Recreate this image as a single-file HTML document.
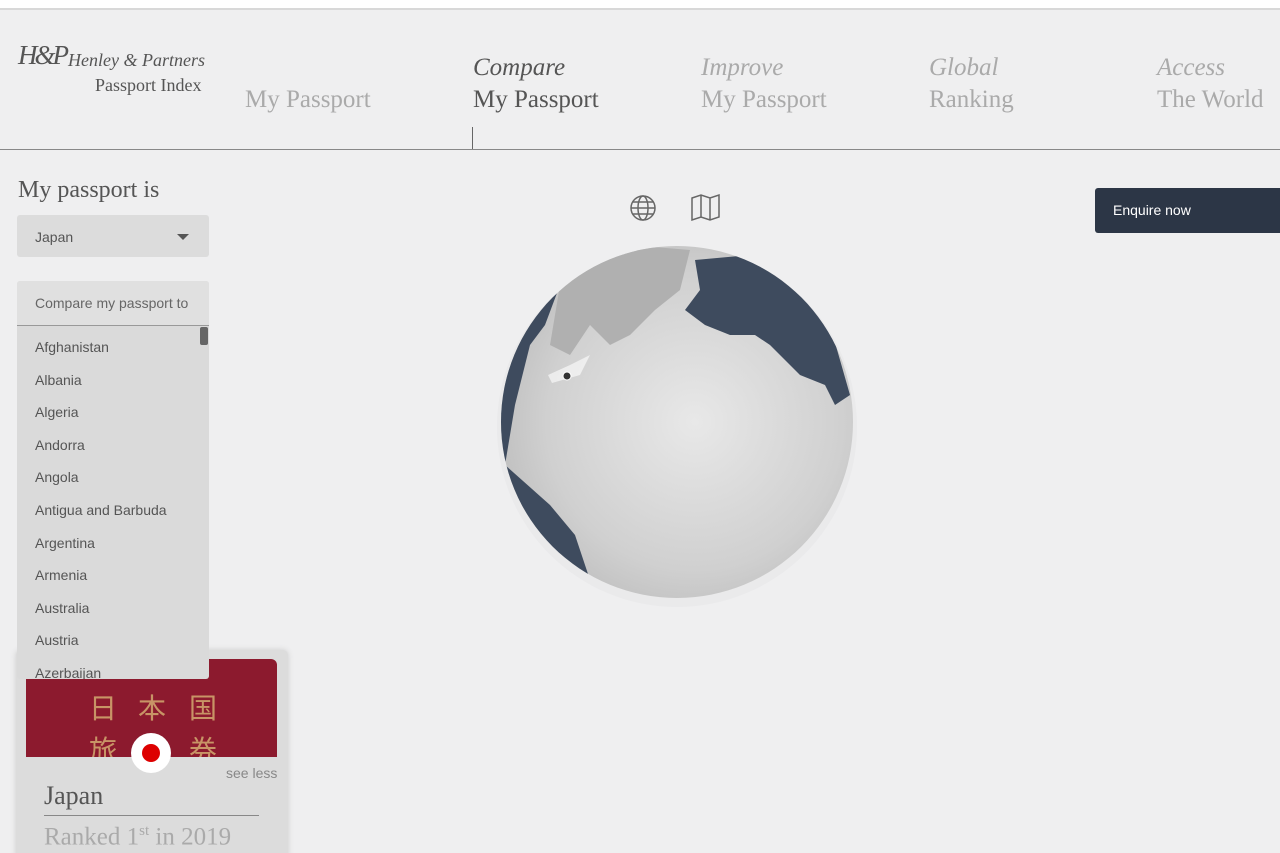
<!DOCTYPE html>
<html><head><meta charset="utf-8"><style>
html,body{margin:0;width:1280px;height:853px;overflow:hidden}
body{background:#efeff0;font-family:"Liberation Sans",sans-serif;position:relative}
.serif{font-family:"Liberation Serif",serif}
.a{position:absolute}
.nav .t{font-family:"Liberation Serif",serif;font-size:25px;color:#aaa;line-height:32px}
.nav i{display:block}
.list div{height:32.6px;line-height:32px;font-size:14px;color:#555;padding-left:18px}
</style></head><body>
<div class="a" style="left:0;top:0;width:1280px;height:8px;background:#fff;border-bottom:2px solid #d8d8d8"></div>
<div class="a" style="left:0;top:149px;width:1280px;height:1px;background:#888"></div>
<div class="a serif" style="left:18px;top:40px;font-size:27px;font-style:italic;color:#555;letter-spacing:-3px">H&amp;P</div>
<div class="a serif" style="left:68px;top:50px;font-size:18px;font-style:italic;color:#555">Henley &amp; Partners</div>
<div class="a serif" style="left:95px;top:75px;font-size:18px;color:#555">Passport Index</div>
<div class="nav">
<div class="a t" style="left:245px;top:84px">My Passport</div>
<div class="a t" style="left:473px;top:52px;color:#555"><i>Compare</i>My Passport</div>
<div class="a t" style="left:701px;top:52px"><i>Improve</i>My Passport</div>
<div class="a t" style="left:929px;top:52px"><i>Global</i>Ranking</div>
<div class="a t" style="left:1157px;top:52px"><i>Access</i>The World</div>
</div>
<div class="a" style="left:472px;top:127px;width:1px;height:22px;background:#666"></div>
<div class="a serif" style="left:18px;top:177px;font-size:24px;color:#555">My passport is</div>
<div class="a" style="left:17px;top:215px;width:192px;height:42px;background:#dcdcdc;border-radius:3px"><span class="a" style="left:18px;top:14px;font-size:14px;color:#555">Japan</span><span class="a" style="left:160px;top:19px;border:6px solid transparent;border-top-color:#555;border-bottom:0"></span></div>
<div class="a" style="left:16px;top:650px;width:272px;height:210px;background:#dcdcdc;border-radius:5px;box-shadow:0 0 6px #ccc"></div>
<div class="a" style="left:26px;top:659px;width:251px;height:98px;background:#8c1a2e;border-radius:6px 6px 0 0;overflow:hidden;font-family:'Noto Sans CJK JP',sans-serif;color:#c89466;font-size:28px">
<span class="a" style="left:63px;top:28px">日</span><span class="a" style="left:112px;top:28px">本</span><span class="a" style="left:163px;top:28px">国</span>
<span class="a" style="left:63px;top:70px">旅</span><span class="a" style="left:163px;top:70px">券</span></div>
<div class="a" style="left:17px;top:281px;width:192px;height:398px;background:#dadada;border-radius:3px;overflow:hidden">
<div style="height:44px;border-bottom:1px solid #999;background:#e0e0e0;font-size:14px;color:#666;line-height:44px;padding-left:18px">Compare my passport to</div>
<div class="a" style="left:183px;top:46px;width:8px;height:18px;background:#666;border-radius:2px"></div>
<div class="list" style="padding-top:5px">
<div>Afghanistan</div><div>Albania</div><div>Algeria</div><div>Andorra</div><div>Angola</div><div>Antigua and Barbuda</div><div>Argentina</div><div>Armenia</div><div>Australia</div><div>Austria</div><div>Azerbaijan</div></div></div>
<div class="a" style="left:131px;top:733px;width:40px;height:40px;border-radius:50%;background:#fff"><div style="margin:11px;width:18px;height:18px;border-radius:50%;background:#d00"></div></div>
<div class="a" style="left:226px;top:765px;font-size:14px;color:#888">see less</div>
<div class="a serif" style="left:44px;top:781px;font-size:26px;color:#555">Japan</div>
<div class="a" style="left:44px;top:815px;width:215px;height:1px;background:#888"></div>
<div class="a serif" style="left:44px;top:823px;font-size:25px;color:#aaa">Ranked 1<sup style="font-size:15px">st</sup> in 2019</div>
<svg class="a" style="left:628px;top:193px" width="100" height="30" fill="none" stroke="#666" stroke-width="1.5">
<circle cx="15" cy="15" r="12"/><ellipse cx="15" cy="15" rx="5" ry="12"/><path d="M3 15h24M5 9h20M5 21h20"/>
<path d="M64 5l9 -3 9 3 9 -3v22l-9 3-9-3-9 3z M73 2v22 M82 5v22"/></svg>
<div class="a" style="left:1095px;top:188px;width:190px;height:45px;background:#2c3646;border-radius:3px;color:#fff;font-size:14px;line-height:45px;padding-left:18px;box-sizing:border-box">Enquire now</div>
<svg class="a" style="left:490px;top:235px" width="375" height="375">
<defs><radialGradient id="g" cx="0.55" cy="0.5" r="0.6"><stop offset="0" stop-color="#e8e8e8"/><stop offset="0.7" stop-color="#d0d0d0"/><stop offset="1" stop-color="#bcbcbc"/></radialGradient>
<clipPath id="c"><circle cx="187" cy="187" r="176"/></clipPath></defs>
<circle cx="187" cy="192" r="180" fill="#e6e6e7" opacity=".6"/>
<circle cx="187" cy="187" r="176" fill="url(#g)"/>
<g clip-path="url(#c)">
<path d="M70 50 L140 10 L200 15 L190 55 L165 75 L140 100 L120 110 L100 90 L80 120 L60 110 Z" fill="#b0b0b0"/>
<path d="M205 25 L260 20 L310 40 L340 90 L360 160 L345 170 L335 150 L310 140 L280 110 L265 100 L240 100 L215 90 L195 75 L210 55 Z" fill="#3e4b5e"/>
<path d="M0 40 L70 50 L55 90 L40 110 L25 170 L15 230 L0 250Z" fill="#3e4b5e"/>
<path d="M15 230 L60 270 L85 300 L100 345 L70 340 L30 300 L5 260Z" fill="#3e4b5e"/>
<path d="M58 140 L80 130 L100 120 L90 140 L62 148Z" fill="#fff" opacity=".6"/>
</g>
<circle cx="77" cy="141" r="4" fill="#333" stroke="#fff"/>
</svg>
</body></html>
